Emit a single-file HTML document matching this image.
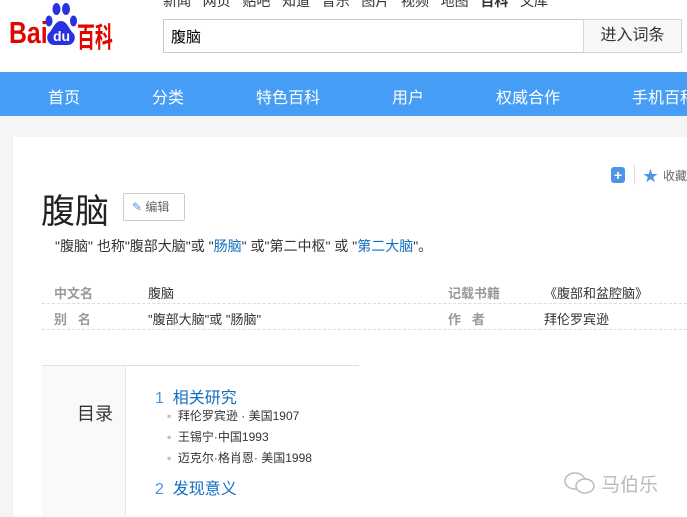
<!DOCTYPE html><html><head><meta charset="utf-8"><style>
body{margin:0;width:687px;height:515px;overflow:hidden;background:#f5f5f5;font-family:"Liberation Sans","Noto Sans CJK SC",sans-serif;position:relative}
.a{position:absolute;white-space:nowrap}
</style></head><body>
<div class="a" style="left:0;top:0;width:687px;height:72px;background:#fff"></div>
<div class="a" style="left:163px;top:-9px;font-size:14px;color:#333;word-spacing:0">新闻&nbsp;&nbsp; 网页&nbsp;&nbsp; 贴吧&nbsp;&nbsp; 知道&nbsp;&nbsp; 音乐&nbsp;&nbsp; 图片&nbsp;&nbsp; 视频&nbsp;&nbsp; 地图&nbsp;&nbsp; <b>百科</b>&nbsp;&nbsp; 文库</div>
<div class="a" style="left:9px;top:15px;font-size:31px;font-weight:bold;color:#e10601;transform:scaleX(0.8);transform-origin:left">Bai</div>
<svg class="a" style="left:44px;top:2px" width="34" height="44" viewBox="0 0 34 44"><g fill="#2932e1"><ellipse cx="5" cy="19" rx="3.5" ry="5.5"/><ellipse cx="12.5" cy="7" rx="4" ry="6"/><ellipse cx="22" cy="7" rx="4" ry="6"/><ellipse cx="29.5" cy="19" rx="3.5" ry="5.5"/><path d="M17 19c-6 0-8 8-12 12-4 4-1 12 5 12h14c6 0 9-8 5-12-4-4-6-12-12-12z"/></g><text x="17.5" y="39" font-size="14" font-weight="bold" fill="#fff" text-anchor="middle" font-family="Liberation Sans">du</text></svg>
<div class="a" style="left:77px;top:16px;font-size:28px;font-weight:bold;color:#e10601;transform:scaleX(0.64);transform-origin:left">百科</div>
<div class="a" style="left:163px;top:19px;width:419px;height:32px;border:1px solid #c8c8c8;background:#fff"></div>
<div class="a" style="left:171px;top:26px;font-size:15px;color:#000">腹脑</div>
<div class="a" style="left:583px;top:19px;width:97px;height:32px;border:1px solid #d5d5d5;background:#f7f7f7;font-size:16px;color:#333;text-align:center;line-height:32px">进入词条</div>
<div class="a" style="left:0;top:72px;width:687px;height:44px;background:#459df5"></div>
<div class="a" style="top:84px;left:48px;font-size:16px;color:#fff">首页</div>
<div class="a" style="top:84px;left:152px;font-size:16px;color:#fff">分类</div>
<div class="a" style="top:84px;left:256px;font-size:16px;color:#fff">特色百科</div>
<div class="a" style="top:84px;left:392px;font-size:16px;color:#fff">用户</div>
<div class="a" style="top:84px;left:496px;font-size:16px;color:#fff">权威合作</div>
<div class="a" style="top:84px;left:632px;font-size:16px;color:#fff">手机百科</div>
<div class="a" style="left:12px;top:137px;width:680px;height:380px;background:#fff;border-left:1px solid #eee"></div>
<div class="a" style="left:611px;top:167px;width:14px;height:16px;background:#4e94e4;border-radius:3px;color:#fff;font-size:14px;font-weight:bold;text-align:center;line-height:16px">+</div>
<div class="a" style="left:634px;top:165px;width:1px;height:20px;background:#ddd"></div>
<div class="a" style="left:643px;top:165px;font-size:15px;color:#4e94e4">★</div>
<div class="a" style="left:663px;top:167px;font-size:12px;color:#666">收藏</div>
<div class="a" style="left:41px;top:184px;font-size:34px;color:#222">腹脑</div>
<div class="a" style="left:123px;top:193px;width:60px;height:26px;border:1px solid #ccc;border-radius:2px;font-size:12px;color:#666;line-height:26px"><span style="color:#4e94e4;margin-left:8px">✎</span> 编辑</div>
<div class="a" style="left:55px;top:236px;font-size:14px;color:#333">"腹脑" 也称"腹部大脑"或 "<span style="color:#136ec2">肠脑</span>" 或"第二中枢" 或 "<span style="color:#136ec2">第二大脑</span>"。</div>
<div class="a" style="left:54px;top:283px;font-size:13px;color:#999;font-weight:bold">中文名</div>
<div class="a" style="left:148px;top:283px;font-size:13px;color:#333">腹脑</div>
<div class="a" style="left:448px;top:283px;font-size:13px;color:#999;font-weight:bold">记载书籍</div>
<div class="a" style="left:544px;top:283px;font-size:13px;color:#333">《腹部和盆腔脑》</div>
<div class="a" style="left:42px;top:303px;width:645px;border-top:1px dashed #ddd"></div>
<div class="a" style="left:54px;top:309px;font-size:13px;color:#999;font-weight:bold">别&nbsp;&nbsp; 名</div>
<div class="a" style="left:148px;top:309px;font-size:13px;color:#333">"腹部大脑"或 "肠脑"</div>
<div class="a" style="left:448px;top:309px;font-size:13px;color:#999;font-weight:bold">作&nbsp;&nbsp; 者</div>
<div class="a" style="left:544px;top:309px;font-size:13px;color:#333">拜伦罗宾逊</div>
<div class="a" style="left:42px;top:329px;width:645px;border-top:1px dashed #ddd"></div>
<div class="a" style="left:42px;top:365px;width:317px;border-top:1px solid #e0e0e0"></div>
<div class="a" style="left:42px;top:366px;width:83px;height:150px;background:#f9f9f9;border-right:1px solid #e8e8e8"></div>
<div class="a" style="left:77px;top:400px;font-size:18px;color:#333">目录</div>
<div class="a" style="left:155px;top:384px;font-size:16px;color:#136ec2"><span style="color:#4e94e4">1</span>&nbsp; 相关研究</div>
<div class="a" style="left:167px;top:407px;font-size:12px;color:#333"><span style="color:#bbb">▪</span>&nbsp; 拜伦罗宾逊 · 美国1907</div>
<div class="a" style="left:167px;top:428px;font-size:12px;color:#333"><span style="color:#bbb">▪</span>&nbsp; 王锡宁·中国1993</div>
<div class="a" style="left:167px;top:449px;font-size:12px;color:#333"><span style="color:#bbb">▪</span>&nbsp; 迈克尔·格肖恩· 美国1998</div>
<div class="a" style="left:155px;top:475px;font-size:16px;color:#136ec2"><span style="color:#4e94e4">2</span>&nbsp; 发现意义</div>
<svg class="a" style="left:563px;top:470px" width="34" height="26" viewBox="0 0 34 26" fill="none" stroke="#bbb" stroke-width="1.5"><ellipse cx="12" cy="11" rx="10" ry="8"/><ellipse cx="22" cy="16" rx="9" ry="7" fill="#fff"/></svg>
<div class="a" style="left:601px;top:470px;font-size:19px;color:#bbb">马伯乐</div>
</body></html>
